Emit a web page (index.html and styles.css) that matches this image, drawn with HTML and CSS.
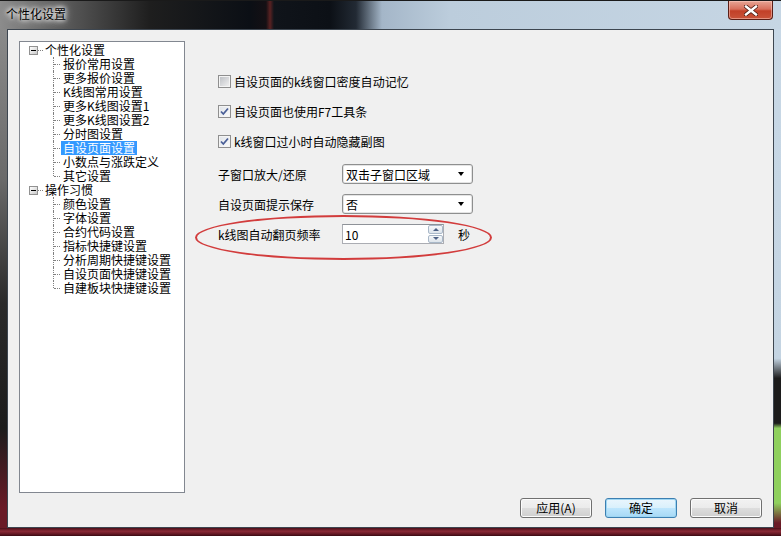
FILE: index.html
```html
<!DOCTYPE html>
<html lang="zh-CN">
<head>
  <meta charset="UTF-8" />
  <title>个性化设置</title>
  <link rel="stylesheet" href="styles.css">
</head>
<body>
  <div class="window">
    <div class="titlebar">
      <span class="title">个性化设置</span>
      <button class="close-btn" type="button">
        <svg width="14" height="11" viewBox="0 0 14 11">
          <path d="M2 1.5 L12 9.5 M12 1.5 L2 9.5" stroke="#4a1a12" stroke-width="4" stroke-linecap="square" />
          <path d="M2 1.5 L12 9.5 M12 1.5 L2 9.5" stroke="#ffffff" stroke-width="2.4" stroke-linecap="square" />
        </svg>
      </button>
    </div>

    <div class="middle">
      <div class="frame-left"></div>
      <div class="client">
        <div class="main">
          <div class="tree">
            <div class="node">
              <div class="row root"><span class="toggle"></span><span class="label">个性化设置</span></div>
              <div class="children">
                <div class="row leaf"><span class="label">报价常用设置</span></div>
                <div class="row leaf"><span class="label">更多报价设置</span></div>
                <div class="row leaf"><span class="label">K线图常用设置</span></div>
                <div class="row leaf"><span class="label">更多K线图设置1</span></div>
                <div class="row leaf"><span class="label">更多K线图设置2</span></div>
                <div class="row leaf"><span class="label">分时图设置</span></div>
                <div class="row leaf"><span class="label selected">自设页面设置</span></div>
                <div class="row leaf"><span class="label">小数点与涨跌定义</span></div>
                <div class="row leaf"><span class="label">其它设置</span></div>
              </div>
            </div>
            <div class="node">
              <div class="row root"><span class="toggle"></span><span class="label">操作习惯</span></div>
              <div class="children">
                <div class="row leaf"><span class="label">颜色设置</span></div>
                <div class="row leaf"><span class="label">字体设置</span></div>
                <div class="row leaf"><span class="label">合约代码设置</span></div>
                <div class="row leaf"><span class="label">指标快捷键设置</span></div>
                <div class="row leaf"><span class="label">分析周期快捷键设置</span></div>
                <div class="row leaf"><span class="label">自设页面快捷键设置</span></div>
                <div class="row leaf"><span class="label">自建板块快捷键设置</span></div>
              </div>
            </div>
          </div>

          <div class="content">
            <label class="check-row">
              <span class="cb"></span>
              <span>自设页面的k线窗口密度自动记忆</span>
            </label>
            <label class="check-row">
              <span class="cb checked">
                <svg width="11" height="11" viewBox="0 0 11 11"><path d="M2 5.5 L4.3 8 L9 2.5" fill="none" stroke="#4a5f97" stroke-width="1.8" /></svg>
              </span>
              <span>自设页面也使用F7工具条</span>
            </label>
            <label class="check-row last">
              <span class="cb checked">
                <svg width="11" height="11" viewBox="0 0 11 11"><path d="M2 5.5 L4.3 8 L9 2.5" fill="none" stroke="#4a5f97" stroke-width="1.8" /></svg>
              </span>
              <span>k线窗口过小时自动隐藏副图</span>
            </label>

            <div class="field-row">
              <span class="field-label">子窗口放大/还原</span>
              <div class="combo"><span>双击子窗口区域</span><span class="arrow"></span></div>
            </div>
            <div class="field-row">
              <span class="field-label">自设页面提示保存</span>
              <div class="combo"><span>否</span><span class="arrow"></span></div>
            </div>
            <div class="field-row">
              <span class="field-label">k线图自动翻页频率</span>
              <div class="spin">
                <span class="spin-value">10</span>
                <span class="spin-btns">
                  <span class="spin-btn"><span class="tri up"></span></span>
                  <span class="spin-btn"><span class="tri down"></span></span>
                </span>
              </div>
              <span class="unit">秒</span>
            </div>

            <div class="mark"></div>
          </div>
        </div>

        <div class="footer">
          <button class="btn" type="button">应用(A)</button>
          <button class="btn default" type="button">确定</button>
          <button class="btn" type="button">取消</button>
        </div>
      </div>
      <div class="frame-right"></div>
    </div>
    <div class="frame-bottom"></div>
  </div>
</body>
</html>
```

FILE: styles.css
```css
body {
  margin: 0;
  padding: 0;
  font-family: "Noto Sans CJK SC", "Liberation Sans", sans-serif;
  font-size: 12px;
  color: #000;
  overflow: hidden;
}

.window {
  width: 781px;
  height: 536px;
  display: flex;
  flex-direction: column;
}

.titlebar {
  height: 29px;
  display: flex;
  justify-content: space-between;
  align-items: flex-start;
  background: linear-gradient(to right, #8c8c8c 0px, #5e5e5e 60px, #1e1e1e 150px, #0b0f15 250px, #141014 266px, #5a2222 270px, #10141a 274px, #0c1016 330px, #222a34 356px, #a4b6c8 382px, #bccddc 450px, #c6d6e4 780px);
  border-top: 1px solid #1a1a1a;
  box-sizing: border-box;
}

.title {
  padding: 6px 0 0 6px;
  line-height: 14px;
  color: #000;
  text-shadow: 0 0 4px #fff, 0 0 6px #fff, 0 0 8px #ddd;
}

.close-btn {
  width: 45px;
  height: 19px;
  margin: 0 8px 0 0;
  padding: 0;
  border: 1px solid #5a1e16;
  border-top: none;
  border-radius: 0 0 4px 4px;
  background: linear-gradient(to bottom, #e7a595 0%, #d8705c 45%, #c24028 55%, #c9533a 100%);
  display: flex;
  align-items: center;
  justify-content: center;
  box-shadow: inset 0 0 0 1px rgba(255, 210, 200, 0.5);
}

.middle {
  flex: 1;
  display: flex;
}

.frame-left {
  width: 7px;
  background: linear-gradient(to bottom, #8a8a8a 0%, #6a6a6a 30%, #2a2a2a 55%, #1c1c1c 80%, #6a1a26 96%);
}

.frame-right {
  width: 7px;
  background: linear-gradient(to bottom, #c8d8e6 0%, #c4d4e2 66%, #1c1c1c 70%, #1c1c1c 79%, #8fd05e 80%, #8fd05e 95%, #6a1a26 99%);
}

.frame-bottom {
  height: 8px;
  background: linear-gradient(to bottom, #4a0f18 0%, #8a2a36 40%, #6a1a26 70%, #3a0a12 100%);
}

.client {
  width: 767px;
  border: 1px solid #3d4650;
  background: #f0f0f0;
  box-sizing: border-box;
  padding: 11px 11px 0 11px;
  display: flex;
  flex-direction: column;
}

.main {
  display: flex;
  height: 452px;
}

/* tree */
.tree {
  width: 166px;
  height: 452px;
  box-sizing: border-box;
  border: 1px solid #828790;
  background: #fff;
  padding-top: 1px;
  line-height: 14px;
}

.row {
  height: 14px;
  display: flex;
  align-items: center;
  position: relative;
  white-space: nowrap;
}

.root {
  padding-left: 9px;
}

.toggle {
  width: 9px;
  height: 9px;
  box-sizing: border-box;
  border: 1px solid #919191;
  background: linear-gradient(to bottom right, #ffffff, #c9c9c9);
  margin-right: 5px;
  position: relative;
}

.toggle::before {
  content: "";
  position: absolute;
  left: 1px;
  top: 3px;
  width: 5px;
  height: 1px;
  background: #000;
}

.toggle::after {
  content: "";
  position: absolute;
  left: 8px;
  top: 3px;
  width: 5px;
  border-top: 1px dotted #808080;
}

.label {
  padding: 0 2px;
  line-height: 14px;
}

.label.selected {
  background: #3399ff;
  color: #fff;
}

.leaf {
  padding-left: 41px;
}

.leaf::before {
  content: "";
  position: absolute;
  left: 33px;
  top: 0;
  height: 14px;
  border-left: 1px dotted #808080;
}

.leaf:last-child::before {
  height: 7px;
}

.leaf::after {
  content: "";
  position: absolute;
  left: 34px;
  top: 7px;
  width: 6px;
  border-top: 1px dotted #808080;
}

/* right side */
.content {
  flex: 1;
  position: relative;
  padding: 30px 0 0 33px;
  display: flex;
  flex-direction: column;
  gap: 10px;
}

.check-row {
  height: 20px;
  display: flex;
  align-items: center;
  gap: 3px;
}

.check-row.last {
  margin-bottom: 3px;
}

.cb {
  width: 13px;
  height: 13px;
  box-sizing: border-box;
  border: 1px solid #8f8f8f;
  background: linear-gradient(to bottom right, #b9bcc1, #f4f4f4);
  box-shadow: inset 0 0 0 1px #f4f4f4;
  display: flex;
  align-items: center;
  justify-content: center;
}

.cb.checked {
  background: linear-gradient(to bottom right, #dfe3e8, #fbfbfb);
}

.field-row {
  height: 20px;
  display: flex;
  align-items: center;
}

.field-label {
  width: 124px;
}

.combo {
  width: 131px;
  height: 20px;
  box-sizing: border-box;
  border: 1px solid #8e8f8f;
  border-radius: 3px;
  background: #fff;
  box-shadow: inset 0 0 0 1px #e4e4e4;
  display: flex;
  align-items: center;
  justify-content: space-between;
  padding: 0 8px 0 3px;
}

.arrow {
  width: 0;
  height: 0;
  border-left: 3.5px solid transparent;
  border-right: 3.5px solid transparent;
  border-top: 4px solid #000;
}

.spin {
  width: 102px;
  height: 20px;
  box-sizing: border-box;
  border: 1px solid #abadb3;
  border-top-color: #8e9298;
  background: #fff;
  display: flex;
  align-items: center;
  justify-content: space-between;
  padding-left: 2px;
}

.spin-btns {
  width: 15px;
  height: 18px;
  display: flex;
  flex-direction: column;
  gap: 1px;
}

.spin-btn {
  flex: 1;
  box-sizing: border-box;
  border: 1px solid #a9b8c8;
  border-radius: 2px;
  background: linear-gradient(to bottom, #f6f8fa, #dde4eb);
  display: flex;
  align-items: center;
  justify-content: center;
}

.tri {
  width: 0;
  height: 0;
  border-left: 3px solid transparent;
  border-right: 3px solid transparent;
}

.tri.up {
  border-bottom: 3px solid #4d6185;
}

.tri.down {
  border-top: 3px solid #4d6185;
}

.unit {
  margin-left: 14px;
}

/* red annotation ring over the last row */
.mark {
  position: absolute;
  left: 10px;
  top: 174px;
  width: 297px;
  height: 45px;
  box-sizing: border-box;
  border: 2px solid #d23c3c;
  border-radius: 50%;
}

/* buttons */
.footer {
  display: flex;
  justify-content: flex-end;
  gap: 13px;
  margin-top: 5px;
}

.btn {
  width: 72px;
  height: 20px;
  padding: 0;
  font-family: inherit;
  font-size: 12px;
  line-height: 18px;
  color: #000;
  border: 1px solid #707070;
  border-radius: 3px;
  background: linear-gradient(to bottom, #f2f2f2 0%, #ebebeb 50%, #dddddd 51%, #cfcfcf 100%);
  box-shadow: inset 0 0 0 1px #fcfcfc;
}

.btn.default {
  border-color: #3c7fb1;
  background: linear-gradient(to bottom, #eaf6fd 0%, #d9f0fc 50%, #bee6fd 51%, #a7d9f5 100%);
  box-shadow: inset 0 0 0 1px #9ed6f3;
}
```
